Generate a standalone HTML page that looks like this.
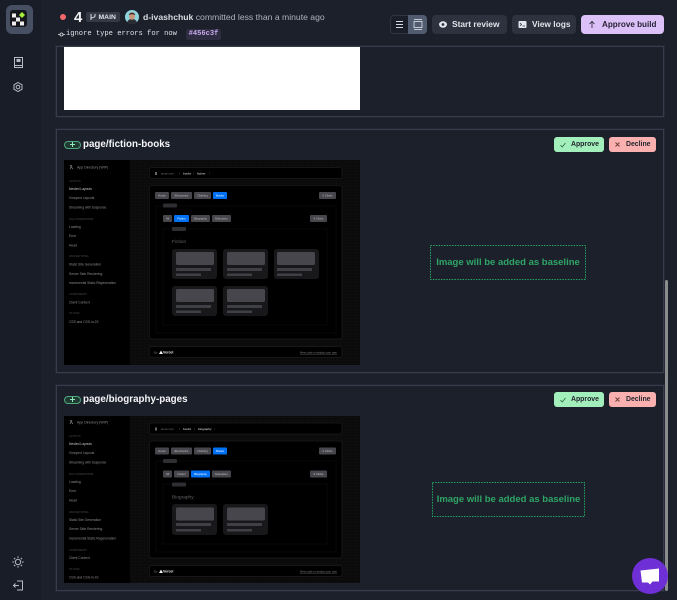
<!DOCTYPE html>
<html><head><meta charset="utf-8"><title>Build</title>
<style>
*{box-sizing:border-box}
html,body{margin:0;padding:0;width:677px;height:600px;overflow:hidden;background:#1c202b;font-family:"Liberation Sans",sans-serif}
.a{position:absolute}
.side{left:0;top:0;width:41px;height:600px;background:#191d27}
.card{left:56px;width:608px;border:1px solid #363c4b;box-shadow:0 0 0 1px #232834;background:#1c202b}
.btn{top:15px;height:19px;border-radius:4px;background:#2d323e;color:#e0e3e9;font-size:8.4px;font-weight:bold;line-height:19px;white-space:nowrap}
.title{left:83px;color:#f4f5f7;font-size:9.8px;font-weight:bold;line-height:14px;white-space:nowrap}
.pill{left:64px;width:17px;height:8px;border:1px solid #4fa77c;border-radius:5px;background:#1f3a33}
.pill:after{content:"";position:absolute;left:5px;top:2px;width:5px;height:1px;background:#8fe8b6}
.pill:before{content:"";position:absolute;left:7px;top:0;width:1px;height:5px;background:#8fe8b6}
.ok,.no{height:15px;border-radius:3px;font-size:6.9px;font-weight:bold;line-height:16px;color:#22262f;white-space:nowrap}
.ok{left:554px;width:50px;background:#a3efbb;padding-left:17px}
.no{left:609px;width:47px;background:#fbb0b0;padding-left:17px}
.dash{color:#2fa566;font-size:9.5px;font-weight:bold;text-align:center;white-space:nowrap}
</style></head>
<body>
<div class="a side"></div>

<div class="a" style="left:6px;top:5px;width:27px;height:29px;border-radius:6px;background:#475063"></div>
<svg class="a" style="left:0;top:0" width="41" height="600" viewBox="0 0 41 600" fill="none">
<rect x="10" y="10" width="17" height="17" rx="3" fill="#15171c"/>
<g fill="#eeeeee"><rect x="12" y="13.500" width="4" height="4"/><rect x="16" y="17.500" width="4" height="4"/><rect x="12" y="21.500" width="4" height="4"/><rect x="20" y="21.500" width="4" height="4"/></g>
<path d="M22 12l3 3-3 3-3-3z" fill="#a6ef3a"/>
<g stroke="#b4bac6" stroke-width="1">
<path d="M14.500 57.500h8v8h-8zM14.500 65.500v2h8v-2"/><rect x="16.500" y="59" width="4" height="3" fill="#b4bac6" stroke="none"/>
<path d="M18 82.500l4 2.300v4.400l-4 2.300-4-2.300v-4.400z"/><circle cx="18" cy="87" r="1.800"/>
<circle cx="18" cy="562" r="2.700"/><path d="M18 556.500v1.300M18 566.200v1.300M12.500 562h1.300M22.200 562h1.300M14.100 558.100l1 1M20.900 564.900l1 1M14.100 565.900l1-1M20.900 559.100l1-1" stroke-width="1.300"/>
<path d="M17 581h5.500v9H17M19 585.500h-5.500M15.500 583.500l-2 2 2 2"/>
</g>
</svg>

<!-- header -->
<div class="a" style="left:60px;top:14px;width:6px;height:6px;border-radius:50%;background:#f2686c"></div>
<div class="a" style="left:74px;top:9px;color:#f1f2f4;font-size:15px;font-weight:bold;line-height:17px">4</div>
<div class="a" style="left:86px;top:12px;width:34px;height:10px;background:#343946;border-radius:2px;color:#dfe2e8;font-size:6.800px;font-weight:bold;line-height:11px;padding-left:12.500px">MAIN</div>
<svg class="a" style="left:89px;top:13px" width="8" height="8" viewBox="0 0 8 8" fill="none" stroke="#dfe2e8" stroke-width="1"><path d="M2 1v6M6 1v2c0 1-1 1.500-4 2"/></svg>
<svg class="a" style="left:125px;top:10px" width="14" height="14" viewBox="0 0 14 14"><circle cx="7" cy="7" r="7" fill="#8fd3dc"/><path d="M2 12.500c1-3 3-3.500 5-3.500s4 .5 5 3.500A7 7 0 0 1 2 12.500z" fill="#2a2d33"/><ellipse cx="7" cy="6" rx="3" ry="3.800" fill="#c9957c"/><path d="M3.800 5c0-3 6.400-3 6.400 0-2-1-4.400-1-6.400 0z" fill="#3a2a22"/></svg>
<div class="a" style="left:143px;top:11px;font-size:8.650px;line-height:13px;color:#aeb3bd;white-space:nowrap"><b style="color:#d9dce2">d-ivashchuk</b> committed less than a minute ago</div>
<svg class="a" style="left:58px;top:31px" width="7" height="7" viewBox="0 0 7 7" fill="none" stroke="#dfe2e7" stroke-width=".8"><circle cx="3.500" cy="3.500" r="1.500"/><path d="M0 3.500h2M5 3.500h2"/></svg>
<div class="a" style="left:66px;top:29px;font-family:'Liberation Mono',monospace;font-size:7.120px;line-height:11px;color:#dfe2e7;white-space:nowrap">ignore type errors for now</div>
<div class="a" style="left:186px;top:29px;width:35px;height:11px;border-radius:2px;background:#2d2c40;color:#c8a8ec;font-family:'Liberation Mono',monospace;font-size:7.100px;font-weight:bold;line-height:11px;text-align:center">#456c3f</div>

<!-- top buttons -->
<div class="a" style="left:390px;top:15px;width:37px;height:19px;border-radius:4px;background:#1a1e28;border:1px solid #2f3543"></div>
<div class="a" style="left:408px;top:15px;width:19px;height:19px;border-radius:0 4px 4px 0;background:#515c70"></div>
<svg class="a" style="left:390px;top:15px" width="37" height="19" viewBox="0 0 37 19" fill="none" stroke="#d7dae0"><path d="M6 6.500h7M6 9.500h7M6 12.500h7"/><rect x="24" y="6.500" width="8" height="6" stroke="#c3c9d4"/><path d="M24 4.500h8M24 14.500h8" stroke="#c3c9d4"/></svg>
<div class="a btn" style="left:432px;width:75px;padding-left:20px">Start review</div>
<svg class="a" style="left:438px;top:20px" width="10" height="9" viewBox="0 0 10 9"><ellipse cx="5" cy="4.500" rx="4" ry="3.200" fill="#e4e7ec"/><circle cx="5" cy="4.500" r="1.400" fill="#2d323e"/></svg>
<div class="a btn" style="left:512px;width:64px;padding-left:20px">View logs</div>
<svg class="a" style="left:518px;top:20px" width="9" height="9" viewBox="0 0 9 9"><rect x=".5" y="1" width="8" height="7" rx="1" fill="#e4e7ec"/><path d="M2 3l1.500 1.500L2 6M4.500 6H7" stroke="#2d323e" fill="none" stroke-width=".8"/></svg>
<div class="a btn" style="left:581px;width:83px;padding-left:21px;background:#dcc1f8;color:#272233;font-size:8.1px">Approve build</div>
<svg class="a" style="left:588px;top:20px" width="8" height="9" viewBox="0 0 8 9" fill="none" stroke="#272233" stroke-width=".8"><path d="M4 8V1.500M1.500 4L4 1.500 6.500 4"/></svg>

<!-- card 1 -->
<div class="a card" style="top:46px;height:71px"></div>
<div class="a" style="left:64px;top:47px;width:296px;height:63px;background:#fff"></div>

<!-- card 2 -->
<div class="a card" style="top:129px;height:244px"></div>
<div class="a pill" style="top:141px"></div>
<div class="a title" style="top:138px">page/fiction-books</div>
<div class="a ok" style="top:137px">Approve</div>
<div class="a no" style="top:137px">Decline</div>
<svg class="a" style="left:559px;top:141px" width="8" height="8" viewBox="0 0 8 8" fill="none" stroke="#2f6b48" stroke-width=".9"><path d="M1.500 4.200L3.200 6 6.500 2"/></svg>
<svg class="a" style="left:614px;top:141px" width="7" height="7" viewBox="0 0 7 7" fill="none" stroke="#6b3a3a" stroke-width=".9"><path d="M1.500 1.500l4 4M5.500 1.500l-4 4"/></svg>
<div class="a dash" style="left:430px;top:245px;width:156px;height:35px;line-height:35px">Image will be added as baseline</div>

<!-- card 3 -->
<div class="a card" style="top:385px;height:206px"></div>
<div class="a pill" style="top:396px"></div>
<div class="a title" style="top:393px">page/biography-pages</div>
<div class="a ok" style="top:392px">Approve</div>
<div class="a no" style="top:392px">Decline</div>
<svg class="a" style="left:559px;top:396px" width="8" height="8" viewBox="0 0 8 8" fill="none" stroke="#2f6b48" stroke-width=".9"><path d="M1.500 4.200L3.200 6 6.500 2"/></svg>
<svg class="a" style="left:614px;top:396px" width="7" height="7" viewBox="0 0 7 7" fill="none" stroke="#6b3a3a" stroke-width=".9"><path d="M1.500 1.500l4 4M5.500 1.500l-4 4"/></svg>
<div class="a dash" style="left:432px;top:482px;width:153px;height:35px;line-height:35px">Image will be added as baseline</div>

<!-- snapshots -->
<svg class="a" style="left:0;top:0" width="677" height="600" viewBox="0 0 677 600" font-family="Liberation Sans, sans-serif">
<defs>
<pattern id="g" width="3" height="3" patternUnits="userSpaceOnUse"><rect width="3" height="3" fill="#0a0a0a"/><path d="M0 .5h3M.5 0v3" stroke="#0f0f0f" stroke-width=".6"/></pattern>
</defs>
<g fill="none" stroke="#27a465" stroke-dasharray="1.500 1.200"><rect x="430.500" y="245.500" width="155" height="34"/><rect x="432.500" y="482.500" width="152" height="34"/></g>

<!-- snapshot fiction -->
<rect x="64" y="160" width="296" height="205" fill="url(#g)"/>
<rect x="64" y="160" width="66" height="205" fill="#000"/>
<g font-size="3.300" fill="#8c8c8c">
<text x="77" y="168.500" font-size="3.500">App Directory (WIP)</text>
<path d="M70 165l3 4M72 165l-2 4" stroke="#999" stroke-width=".6"/>
<g font-size="2.500" fill="#4c4c4c"><text x="69" y="182">LAYOUTS</text><text x="69" y="220">FILE CONVENTIONS</text><text x="69" y="257">DATA FETCHING</text><text x="69" y="295">COMPONENTS</text><text x="69" y="314">STYLING</text></g>
<text x="69" y="190" fill="#c8c8c8">Nested Layouts</text><text x="69" y="199">Grouped Layouts</text><text x="69" y="208.500">Streaming with Suspense</text>
<text x="69" y="228">Loading</text><text x="69" y="237">Error</text><text x="69" y="246.500">Head</text>
<text x="69" y="265.500">Static Site Generation</text><text x="69" y="275">Server Side Rendering</text><text x="69" y="284">Incremental Static Regeneration</text>
<text x="69" y="303.500">Client Context</text><text x="69" y="323">CSS and CSS-in-JS</text>
</g>
<rect x="149.500" y="167.500" width="192.500" height="11" rx="2.500" fill="#000" stroke="#1c1c1c" stroke-width=".7"/>
<g font-size="2.800" fill="#777"><text x="161" y="174.500">acme.com</text><text x="183" y="174.500" fill="#bbb" font-weight="bold">books</text><text x="197" y="174.500" fill="#bbb" font-weight="bold">fiction</text><text x="179" y="174.500">/</text><text x="193" y="174.500">/</text><text x="209" y="174.500">/</text></g>
<rect x="155" y="172" width="2" height="3" fill="#666"/>
<rect x="149.500" y="185.500" width="192.500" height="153.500" rx="2.500" fill="#000" stroke="#1c1c1c" stroke-width=".7"/>
<g fill="#46464c"><rect x="155" y="192" width="14" height="7" rx="1"/><rect x="171" y="192" width="21" height="7" rx="1"/><rect x="194" y="192" width="17" height="7" rx="1"/><rect x="319" y="192" width="17" height="7" rx="1"/>
<rect x="163" y="215" width="9" height="7" rx="1"/><rect x="191" y="215" width="19" height="7" rx="1"/><rect x="212" y="215" width="19" height="7" rx="1"/><rect x="310" y="215" width="17" height="7" rx="1"/></g>
<rect x="213" y="192" width="14" height="7" rx="1" fill="#0070f3"/><rect x="174" y="215" width="15" height="7" rx="1" fill="#0070f3"/>
<g font-size="2.800" fill="#c0c0c0" text-anchor="middle"><text x="162" y="196.500">Home</text><text x="181.500" y="196.500">Electronics</text><text x="202.500" y="196.500">Clothing</text><text x="220" y="196.500" fill="#fff">Books</text><text x="327.500" y="196.500">0 Clicks</text>
<text x="167.500" y="219.500">All</text><text x="181.500" y="219.500" fill="#fff">Fiction</text><text x="200.500" y="219.500">Biography</text><text x="221.500" y="219.500">Education</text><text x="318.500" y="219.500">0 Clicks</text></g>
<g fill="none" stroke="#0e0e0e" stroke-width=".7"><rect x="156" y="206" width="180" height="127"/><rect x="163" y="229" width="164" height="96"/></g>
<rect x="163" y="203.500" width="14" height="4" rx="1" fill="#2e2e33"/><rect x="172" y="227" width="14" height="4" rx="1" fill="#2e2e33"/>
<text x="172" y="243" font-size="4.800" fill="#63636b">Fiction</text>
<g fill="#18181b"><rect x="172" y="249" width="45" height="30" rx="3"/><rect x="223" y="249" width="45" height="30" rx="3"/><rect x="274" y="249" width="45" height="30" rx="3"/><rect x="172" y="286" width="45" height="30" rx="3"/><rect x="223" y="286" width="45" height="30" rx="3"/></g>
<g fill="#46464c"><rect x="176" y="252" width="38" height="13" rx="1.500"/><rect x="227" y="252" width="38" height="13" rx="1.500"/><rect x="277" y="252" width="38" height="13" rx="1.500"/><rect x="176" y="289" width="38" height="13" rx="1.500"/><rect x="227" y="289" width="38" height="13" rx="1.500"/></g>
<g fill="#3f3f46"><rect x="176" y="268" width="35" height="3"/><rect x="176" y="273.500" width="25" height="2.500"/><rect x="227" y="268" width="35" height="3"/><rect x="227" y="273.500" width="25" height="2.500"/><rect x="277" y="268" width="35" height="3"/><rect x="277" y="273.500" width="25" height="2.500"/><rect x="176" y="305" width="35" height="3"/><rect x="176" y="310.500" width="25" height="2.500"/><rect x="227" y="305" width="35" height="3"/><rect x="227" y="310.500" width="25" height="2.500"/></g>
<rect x="149.500" y="346.500" width="192.500" height="11" rx="2.500" fill="#000" stroke="#1c1c1c" stroke-width=".7"/>
<text x="154" y="353.500" font-size="2.800" fill="#777">By</text><path d="M159 354l2-3.500 2 3.500z" fill="#eee"/><text x="163" y="353.500" font-size="3.500" font-weight="bold" fill="#eee">Vercel</text>
<text x="337" y="353.500" font-size="2.800" fill="#888" text-anchor="end" text-decoration="underline">View code or deploy your own</text>

<!-- snapshot biography -->
<rect x="64" y="416" width="296" height="167" fill="url(#g)"/>
<rect x="64" y="416" width="66" height="167" fill="#000"/>
<g font-size="3.300" fill="#8c8c8c">
<text x="77" y="423.500" font-size="3.500">App Directory (WIP)</text>
<path d="M70 420l3 4M72 420l-2 4" stroke="#999" stroke-width=".6"/>
<g font-size="2.500" fill="#4c4c4c"><text x="69" y="437">LAYOUTS</text><text x="69" y="475">FILE CONVENTIONS</text><text x="69" y="513">DATA FETCHING</text><text x="69" y="551">COMPONENTS</text><text x="69" y="570">STYLING</text></g>
<text x="69" y="445" fill="#c8c8c8">Nested Layouts</text><text x="69" y="454">Grouped Layouts</text><text x="69" y="463.500">Streaming with Suspense</text>
<text x="69" y="483">Loading</text><text x="69" y="492">Error</text><text x="69" y="501.500">Head</text>
<text x="69" y="521">Static Site Generation</text><text x="69" y="530">Server Side Rendering</text><text x="69" y="539.500">Incremental Static Regeneration</text>
<text x="69" y="559">Client Context</text><text x="69" y="578.500">CSS and CSS-in-JS</text>
</g>
<rect x="149.500" y="423" width="192.500" height="11" rx="2.500" fill="#000" stroke="#1c1c1c" stroke-width=".7"/>
<g font-size="2.800" fill="#777"><text x="161" y="430">acme.com</text><text x="183" y="430" fill="#bbb" font-weight="bold">books</text><text x="198" y="430" fill="#bbb" font-weight="bold">biography</text><text x="179" y="430">/</text><text x="194" y="430">/</text><text x="214" y="430">/</text></g>
<rect x="155" y="427.500" width="2" height="3" fill="#666"/>
<rect x="149.500" y="441" width="192.500" height="117" rx="2.500" fill="#000" stroke="#1c1c1c" stroke-width=".7"/>
<g fill="#46464c"><rect x="155" y="447.500" width="14" height="7" rx="1"/><rect x="171" y="447.500" width="21" height="7" rx="1"/><rect x="194" y="447.500" width="17" height="7" rx="1"/><rect x="319" y="447.500" width="17" height="7" rx="1"/>
<rect x="163" y="470.500" width="9" height="7" rx="1"/><rect x="174" y="470.500" width="15" height="7" rx="1"/><rect x="212" y="470.500" width="19" height="7" rx="1"/><rect x="310" y="470.500" width="17" height="7" rx="1"/></g>
<rect x="213" y="447.500" width="14" height="7" rx="1" fill="#0070f3"/><rect x="191" y="470.500" width="19" height="7" rx="1" fill="#0070f3"/>
<g font-size="2.800" fill="#c0c0c0" text-anchor="middle"><text x="162" y="452">Home</text><text x="181.500" y="452">Electronics</text><text x="202.500" y="452">Clothing</text><text x="220" y="452" fill="#fff">Books</text><text x="327.500" y="452">0 Clicks</text>
<text x="167.500" y="475">All</text><text x="181.500" y="475">Fiction</text><text x="200.500" y="475" fill="#fff">Biography</text><text x="221.500" y="475">Education</text><text x="318.500" y="475">0 Clicks</text></g>
<g fill="none" stroke="#0e0e0e" stroke-width=".7"><rect x="156" y="461" width="180" height="91"/><rect x="163" y="484" width="164" height="60"/></g>
<rect x="163" y="459" width="14" height="4" rx="1" fill="#2e2e33"/><rect x="172" y="482.500" width="14" height="4" rx="1" fill="#2e2e33"/>
<text x="172" y="498.500" font-size="4.800" fill="#63636b">Biography</text>
<g fill="#18181b"><rect x="172" y="504" width="45" height="31" rx="3"/><rect x="223" y="504" width="45" height="31" rx="3"/></g>
<g fill="#46464c"><rect x="176" y="507.500" width="38" height="13" rx="1.500"/><rect x="227" y="507.500" width="38" height="13" rx="1.500"/></g>
<g fill="#3f3f46"><rect x="176" y="523" width="35" height="3"/><rect x="176" y="529" width="25" height="2.500"/><rect x="227" y="523" width="35" height="3"/><rect x="227" y="529" width="25" height="2.500"/></g>
<rect x="149.500" y="565.500" width="192.500" height="11" rx="2.500" fill="#000" stroke="#1c1c1c" stroke-width=".7"/>
<text x="154" y="572.500" font-size="2.800" fill="#777">By</text><path d="M159 573l2-3.500 2 3.500z" fill="#eee"/><text x="163" y="572.500" font-size="3.500" font-weight="bold" fill="#eee">Vercel</text>
<text x="337" y="572.500" font-size="2.800" fill="#888" text-anchor="end" text-decoration="underline">View code or deploy your own</text>
</svg>

<!-- scrollbar -->
<div class="a" style="left:665px;top:280px;width:3px;height:311px;border-radius:2px;background:#8a8c90"></div>

<!-- chat -->
<svg class="a" style="left:632px;top:558px" width="36" height="36" viewBox="0 0 36 36"><circle cx="18" cy="18" r="18" fill="#6e2fd6"/><path d="M8.500 12.500L27 10.500V23.500H20.500L18 26.500 16 24.500H10z" fill="#fff"/></svg>
</body></html>
